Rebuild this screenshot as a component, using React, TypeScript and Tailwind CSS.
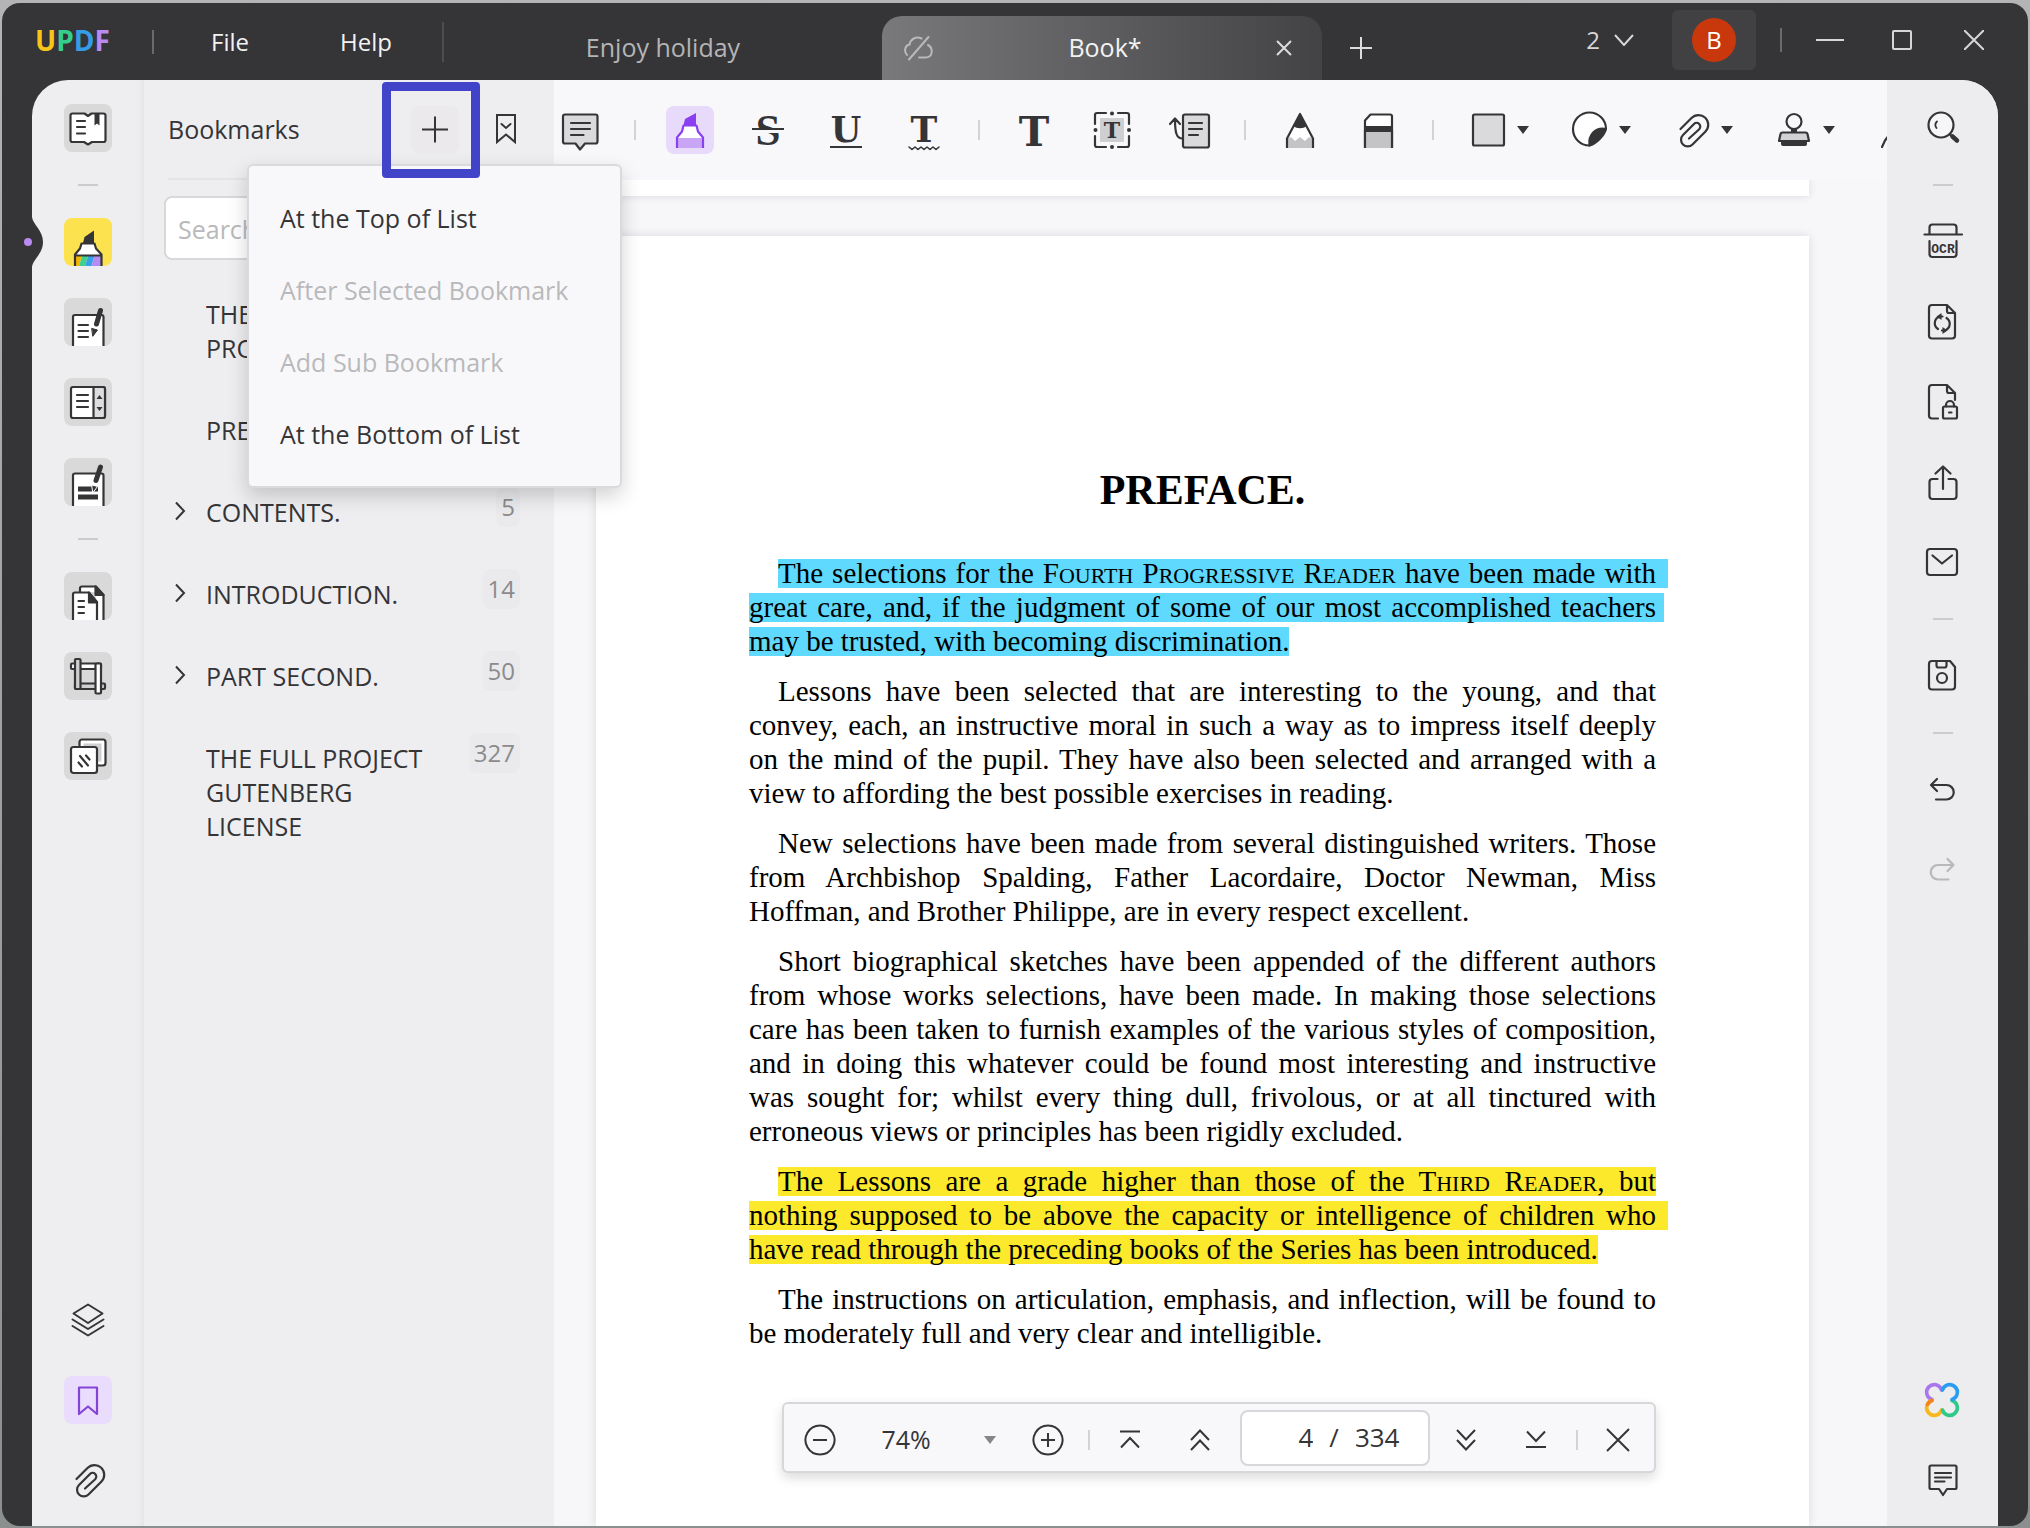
import React from "react";

type IconProps = { children: React.ReactNode; width?: number };

// 48px icon canvas, shared by both rails and the toolbar
const Icon = ({ children, width = 2 }: IconProps) => (
  <svg
    viewBox="0 0 48 48"
    className="size-12 shrink-0 overflow-visible"
    fill="none"
    stroke="currentColor"
    strokeWidth={width}
    strokeLinecap="round"
    strokeLinejoin="round"
    aria-hidden="true"
  >
    {children}
  </svg>
);

const BookIcon = () => (
  <Icon width={2.2}>
    <path
      d="M8.5 9.5H20.5L24 12l3.5-2.500H39.500a2 2 0 0 1 2 2V36a2 2 0 0 1-2 2H28l-4 2.500L20 38H8.500a2 2 0 0 1-2-2V11.500a2 2 0 0 1 2-2Z"
      fill="#fff"
    />
    <path d="M13 17h8M13 23h8M13 29.500h8" />
    <path d="M30.500 10h5v11.500l-2.500-2-2.500 2Z" fill="currentColor" stroke="none" />
  </Icon>
);

const MarkerIcon = () => (
  <Icon width={2.2}>
    <path d="M19 25 20.500 19 30 12.500V25Z" fill="currentColor" stroke="none" />
    <path d="M18 25.500h12.500l1.500 5 5 5.500V48H11V36l5-5.500Z" fill="#fff" stroke="none" />
    <path d="M12 38h6l-3 10h-3Z" fill="#f5b400" stroke="none" />
    <path d="M18 38h6l-3 10h-6Z" fill="#3fd08c" stroke="none" />
    <path d="M24 38h6.500l-3 10H21Z" fill="#38a0e8" stroke="none" />
    <path d="M30.500 38H37v10h-9.500Z" fill="#b48af5" stroke="none" />
    <path d="M11 48V36.500l5-6 1.500-5h13l1.500 5 5.500 6V48M11 37.500h26.500" strokeLinecap="butt" />
  </Icon>
);

const EditIcon = () => (
  <Icon width={2.2}>
    <path d="M9 48V19a2 2 0 0 1 2-2h26.500a2 2 0 0 1 2 2v29" fill="#fff" strokeLinecap="butt" />
    <path d="M14.500 27H24M14.500 33H24M14.500 39H24" />
    <path d="M36.500 12.500 32.500 26" strokeWidth="5" />
    <path d="M28 30.500 33.500 32l-4.500 6Z" fill="currentColor" strokeWidth="1" />
  </Icon>
);

const ReaderIcon = () => (
  <Icon width={2.2}>
    <rect x="7" y="9" width="34" height="31" rx="2" fill="#fff" />
    <path d="M29.500 9H39a2 2 0 0 1 2 2v27a2 2 0 0 1-2 2h-9.500Z" fill="#dddddf" />
    <path d="M13 17h11M13 23h11M13 29h11" />
    <path d="M35.500 17l3 4h-6ZM35.500 33l3-4h-6Z" fill="currentColor" stroke="none" />
  </Icon>
);

const RedactIcon = () => (
  <Icon width={2.2}>
    <path d="M9 48V17.500a2 2 0 0 1 2-2h26.500a2 2 0 0 1 2 2V48" fill="#fff" strokeLinecap="butt" />
    <path d="M14 28.500h20v5H14ZM14 36.500h20v5H14Z" fill="currentColor" stroke="none" />
    <path d="M36.500 9 32 22.500" strokeWidth="5" />
    <path d="M28 27 33.500 28.500l-4.500 6Z" fill="currentColor" stroke="#fff" strokeWidth="1" />
  </Icon>
);

const PagesIcon = () => (
  <Icon width={2.2}>
    <path d="M16 20v-3.500a2 2 0 0 1 2-2h14l7.500 8.500V48H32V20Z" fill="#fff" stroke="none" />
    <path d="M16 20v-3.500a2 2 0 0 1 2-2h14l7.500 8.500V48" strokeLinecap="butt" />
    <path d="M31.500 14.500V23h8Z" fill="currentColor" />
    <path d="M9 48V22.500a2 2 0 0 1 2-2h13.500L33 30v18" fill="#fff" strokeLinecap="butt" />
    <path d="M25 20.500V30.500h8Z" fill="currentColor" />
    <path d="M14.500 29H20M14.500 35H20M14.500 41H20" />
  </Icon>
);

const CropIcon = () => (
  <Icon width={2.2}>
    <rect x="7" y="11.500" width="30" height="5.500" rx="1" fill="#fff" />
    <rect x="11" y="31.500" width="30" height="5.500" rx="1" fill="#cfcfd1" />
    <rect x="11" y="7" width="5.500" height="30" rx="1" fill="#cfcfd1" />
    <rect x="31.500" y="11.500" width="5.500" height="30" rx="1" fill="#fff" />
  </Icon>
);

const WatermarkIcon = () => (
  <Icon width={2.2}>
    <rect x="15.500" y="7.500" width="26" height="26" rx="2.500" fill="#fff" />
    <rect x="19.500" y="11.500" width="18" height="18" fill="#cfcfd1" stroke="none" />
    <rect x="7" y="15" width="26" height="26" rx="2.500" fill="#fff" />
    <path d="M14.500 30.500 18 34.500M16 24 24 33.500M22 23.500 25.500 27.500" />
  </Icon>
);

const LayersIcon = () => (
  <Icon>
    <path d="M24 8.500 38.500 17.500 24 27 9.500 17.500ZM8.500 23.500 24 33l15.500-9.500M8.500 30 24 39.500 39.500 30" />
  </Icon>
);

const BookmarkIcon = () => (
  <Icon width={2.2}>
    <path d="M15 11.500H33V38L24 30.500 15 38Z" />
  </Icon>
);

const ClipIcon = () => (
  <Icon width={2.2}>
    <path d="M12.500 23 23.500 12a9.700 9.700 0 0 1 14 13.500L24.500 38.500A6.600 6.600 0 0 1 15 29L26 18a3.600 3.600 0 0 1 5.200 5.200L21 32.500" />
  </Icon>
);

const CommentIcon = () => (
  <Icon width={2.2}>
    <path
      d="M9 8.500H39.500a2 2 0 0 1 2 2V35.500a2 2 0 0 1-2 2H29L24 43.500 19.500 37.500H9a2 2 0 0 1-2-2V10.500a2 2 0 0 1 2-2Z"
      fill="#dadadc"
    />
    <path d="M15 17H34M15 23H34M15 29H27.500" />
  </Icon>
);

const HighlightToolIcon = () => (
  <Icon width={2.2}>
    <path d="M17.500 19 19 13 30 7V19Z" fill="currentColor" stroke="none" />
    <path d="M17 19.500H30.500l2 6 4.500 6V42H11V31.500l4.500-6Z" fill="#fff" stroke="none" />
    <path d="M11 32H37V42H11Z" fill="#c9a5f6" stroke="none" />
    <path d="M11 42V31.500l5-6 1.500-6h13l1.500 6 5 6V42" strokeLinecap="butt" />
  </Icon>
);

type GlyphProps = { y: number; size: number; slab?: boolean; children: string };

const Glyph = ({ y, size, slab = true, children }: GlyphProps) => (
  <text
    x="24"
    y={y}
    fontSize={size}
    textAnchor="middle"
    fill="currentColor"
    stroke="none"
    className={slab ? "font-['DejaVu_Serif',serif] font-bold" : "font-['Liberation_Serif',serif] font-bold"}
  >
    {children}
  </text>
);

const StrikeIcon = () => (
  <Icon>
    <Glyph y={39} size={45} slab={false}>S</Glyph>
    <path d="M8 25.500H40" stroke="#f8f8fa" strokeWidth="3" strokeLinecap="butt" />
    <path d="M8 23H40" strokeLinecap="butt" />
  </Icon>
);

const UnderlineIcon = () => (
  <Icon>
    <Glyph y={36} size={35}>U</Glyph>
    <path d="M8 41H40" strokeLinecap="butt" />
  </Icon>
);

const SquigglyIcon = () => (
  <Icon>
    <Glyph y={36} size={36}>T</Glyph>
    <path d="M9 41l3 2.500 3-2.500 3 2.500 3-2.500 3 2.500 3-2.500 3 2.500 3-2.500 3 2.500 3-2.500" strokeWidth="1.600" />
  </Icon>
);

const TextIcon = () => (
  <Icon>
    <Glyph y={40} size={41}>T</Glyph>
  </Icon>
);

const TextBoxIcon = () => (
  <Icon width={2.2}>
    <rect x="12" y="12" width="24" height="24" fill="#cfcfd1" stroke="none" />
    <Glyph y={32} size={22}>T</Glyph>
    <path d="M18 7H9a2 2 0 0 0-2 2v9M30 7h9a2 2 0 0 1 2 2v9M7 30v9a2 2 0 0 0 2 2h9M41 30v9a2 2 0 0 1-2 2h-9" />
    <path d="M24 7.500h.01M24 41h.01M7.500 24h.01M41 24h.01" strokeWidth="4" />
  </Icon>
);

const CalloutIcon = () => (
  <Icon width={2.2}>
    <rect x="17" y="8.500" width="26" height="33" rx="2" fill="#dadadc" />
    <path d="M23 17H36M23 23H36M23 29H32M4 18 9 12.500 14 18M9 13C9 27 10.500 32.500 16.500 32.500" />
  </Icon>
);

const PencilIcon = () => (
  <Icon width={2.2}>
    <path d="M24 8 37 32V42H11V32Z" fill="#fff" stroke="none" />
    <path d="M11 33l4-2 4 4 5-4 5 4 4-4 4 2V42H11Z" fill="#c4c4c6" stroke="none" />
    <path d="M11 42V32.500L24 8 37 32.500V42" strokeLinecap="butt" />
    <path d="M24 8 30.500 20c-3 3-10 3-13 0Z" fill="currentColor" stroke="none" />
  </Icon>
);

const EraserIcon = () => (
  <Icon width={2.2}>
    <path d="M11 42V14.500L16.500 8.500H36a2 2 0 0 1 2 2V42" fill="#fff" strokeLinecap="butt" />
    <path d="M12 24H37V42H12Z" fill="#c4c4c6" stroke="none" />
    <path d="M11 20H38v6H11Z" fill="currentColor" stroke="none" />
    <path d="M11 42V24M38 42V24" strokeLinecap="butt" />
  </Icon>
);

const SquareIcon = () => (
  <Icon width={2.2}>
    <rect x="9" y="8.500" width="31" height="31" rx="1.500" fill="#dadadc" />
  </Icon>
);

const StickerIcon = () => (
  <Icon width={2.2}>
    <path d="M40 23a16.500 16.500 0 1 0-16.500 16.500" fill="#fff" />
    <path d="M40 23C30 21 22 28 23.500 39.500 30 38 38 30 40 23Z" fill="currentColor" />
  </Icon>
);

const StampIcon = () => (
  <Icon width={2.2}>
    <circle cx="24" cy="15.500" r="7.500" />
    <path d="M21 22.500h6v4h-6Z" fill="currentColor" stroke="none" />
    <path d="M12.500 26.500H35.500a2 2 0 0 1 2 1.500L39 35H9l1.500-7a2 2 0 0 1 2-1.500Z" fill="#d2d2d4" />
    <path d="M11 35.500H37V38a2 2 0 0 1-2 2H13a2 2 0 0 1-2-2Z" fill="currentColor" stroke="none" />
  </Icon>
);

const SignIcon = () => (
  <Icon width={2.2}>
    <path d="M10 41 13 34.500 24 20" />
  </Icon>
);

const PlusIcon = () => (
  <Icon>
    <path d="M24 10.500V36.500M11 23.500H37" strokeLinecap="butt" />
  </Icon>
);

const BookmarkDownIcon = () => (
  <Icon>
    <path d="M15 9H33V36L24 28.500 15 36ZM19.500 18 24 22l4.500-4" strokeLinejoin="miter" />
  </Icon>
);

const SearchIcon = () => (
  <Icon width={2.2}>
    <circle cx="22" cy="21" r="12.500" fill="#f6f5f7" />
    <path d="M18 17.500c-2 2-2 4.500-.5 6.500" strokeWidth="1.800" />
    <path d="M31 30.500 33 32.500" />
    <path d="M33.500 32.500 38 36.500" strokeWidth="4.500" />
  </Icon>
);

const OcrIcon = () => (
  <Icon width={2.2}>
    <path d="M10.500 16V9.500a3 3 0 0 1 3-3h21a3 3 0 0 1 3 3V16M5.500 16.500H43M10.500 23V36a3 3 0 0 0 3 3h21a3 3 0 0 0 3-3V23" />
    <text
      x="24"
      y="34.500"
      fontSize="13"
      textAnchor="middle"
      fill="currentColor"
      stroke="none"
      className="font-['Liberation_Mono',monospace] font-bold"
    >
      OCR
    </text>
  </Icon>
);

const ConvertIcon = () => (
  <Icon width={2.2}>
    <path d="M28 7H13a3 3 0 0 0-3 3V37.500a3 3 0 0 0 3 3H33a3 3 0 0 0 3-3V15ZM28 7v6a2 2 0 0 0 2 2h6" />
    <path d="M19 31c-4.500-3-4.500-10 1.500-12.500h3M27.500 20c4.500 3 4.500 10-1.500 12.500h-3" />
    <path d="M22.500 15v7l-5-3.500ZM23.500 29v7l5-3.500Z" fill="currentColor" stroke="none" />
  </Icon>
);

const LockIcon = () => (
  <Icon width={2.2}>
    <path d="M19 40.500H13a3 3 0 0 1-3-3V10a3 3 0 0 1 3-3H28l8 8V22M28 7v6a2 2 0 0 0 2 2h6" />
    <rect x="24" y="28.500" width="14" height="12" rx="1.500" />
    <path d="M27 28.500V27a4 4 0 0 1 8 0v1.500M30 34.500h2.500" />
  </Icon>
);

const ShareIcon = () => (
  <Icon width={2.2}>
    <path d="M18.500 21H13.500a3 3 0 0 0-3 3V38a3 3 0 0 0 3 3h21a3 3 0 0 0 3-3V24a3 3 0 0 0-3-3H29.500M24 31V8.500M16.500 15.500 24 8.500l7.500 7" />
  </Icon>
);

const MailIcon = () => (
  <Icon width={2.2}>
    <rect x="8" y="11" width="30" height="26" rx="3" />
    <path d="M13.500 17.500 23 25.500 33 17.500" />
  </Icon>
);

const SaveIcon = () => (
  <Icon width={2.2}>
    <path d="M13 9H31l5 6V34.500a3 3 0 0 1-3 3H13a3 3 0 0 1-3-3V12a3 3 0 0 1 3-3ZM17.500 9v4.500a2 2 0 0 0 2 2h6a2 2 0 0 0 2-2V9" />
    <circle cx="23" cy="26" r="5" />
  </Icon>
);

const UndoIcon = () => (
  <Icon width={2.2}>
    <path d="M18 13 12 19l6 6M12.500 19H27.500a7 7 0 0 1 0 14.500H17" />
  </Icon>
);

const RedoIcon = () => (
  <Icon width={2.2}>
    <path d="M28.500 13 34.500 19l-6 6M34 19H19a7 7 0 0 0 0 14.500H29.500" />
  </Icon>
);

const AiIcon = () => (
  <Icon width={3.6}>
    <path d="M22.500 14A7.600 7.600 0 1 0 13 23.500" stroke="#a877ec" />
    <path d="M13 24.500A7.600 7.600 0 1 0 22.500 34" stroke="#f8b71c" />
    <path d="M13 24.500A7.600 7.600 0 0 0 8.500 28.500" stroke="#f58220" />
    <path d="M23.500 34A7.600 7.600 0 1 0 33 24.500" stroke="#2fc98a" />
    <path d="M33 23.500A7.600 7.600 0 1 0 23.500 14" stroke="#2b9df0" />
  </Icon>
);

const NoteIcon = () => (
  <Icon width={2.2}>
    <path d="M12 9.500H36a1.500 1.500 0 0 1 1.500 1.500V31.500A1.500 1.500 0 0 1 36 33H28l-4 6-4-6H12a1.500 1.500 0 0 1-1.500-1.500V11A1.500 1.500 0 0 1 12 9.500ZM16 17H32M16 21.500H32M16 25.500H25.500" />
  </Icon>
);

const Caret = () => (
  <svg viewBox="0 0 12 8" className="h-2 w-3" fill="currentColor" aria-hidden="true">
    <path d="M0 0H12L6 8Z" />
  </svg>
);

type RailItem = { label: string; icon?: React.ReactNode; tile?: string };

const leftRail: RailItem[] = [
  { label: "Reader", icon: <BookIcon />, tile: "bg-[#d9d9da]" },
  { label: "divider-1" },
  { label: "Comment", icon: <MarkerIcon />, tile: "bg-[#fde24f]" },
  { label: "Edit", icon: <EditIcon />, tile: "bg-[#d9d9da]" },
  { label: "Form", icon: <ReaderIcon />, tile: "bg-[#d9d9da]" },
  { label: "Redact", icon: <RedactIcon />, tile: "bg-[#d9d9da]" },
  { label: "divider-2" },
  { label: "Organize pages", icon: <PagesIcon />, tile: "bg-[#d9d9da]" },
  { label: "Crop", icon: <CropIcon />, tile: "bg-[#d9d9da]" },
  { label: "Watermark", icon: <WatermarkIcon />, tile: "bg-[#d9d9da]" },
];

const leftRailBottom: RailItem[] = [
  { label: "Layers", icon: <LayersIcon /> },
  { label: "Bookmark", icon: <BookmarkIcon />, tile: "bg-[#e9dcfc] text-[#8544d6]" },
  { label: "Attachments", icon: <ClipIcon /> },
];

const rightRail: RailItem[] = [
  { label: "Search", icon: <SearchIcon /> },
  { label: "divider-1" },
  { label: "Recognize text", icon: <OcrIcon /> },
  { label: "Convert", icon: <ConvertIcon /> },
  { label: "Protect", icon: <LockIcon /> },
  { label: "Share", icon: <ShareIcon /> },
  { label: "Email", icon: <MailIcon /> },
  { label: "divider-2" },
  { label: "Save", icon: <SaveIcon /> },
  { label: "divider-3" },
  { label: "Undo", icon: <UndoIcon /> },
  { label: "Redo", icon: <RedoIcon />, tile: "text-[#b9b7ba]" },
];

const rightRailBottom: RailItem[] = [
  { label: "AI", icon: <AiIcon /> },
  { label: "Notes", icon: <NoteIcon /> },
];

const RailGroup = ({ items }: { items: RailItem[] }) => (
  <div className="flex flex-col items-center gap-8">
    {items.map((item) =>
      item.icon ? (
        <button key={item.label} aria-label={item.label} className={`size-12 rounded-lg ${item.tile ?? ""}`}>
          {item.icon}
        </button>
      ) : (
        <div key={item.label} className="h-0.5 w-5 bg-[#cbcbcd]" />
      )
    )}
  </div>
);

const tools: RailItem[] = [
  { label: "Note", icon: <CommentIcon /> },
  { label: "divider-1" },
  { label: "Highlight", icon: <HighlightToolIcon />, tile: "bg-[#e8dafb] text-[#8a3ff0]" },
  { label: "Strikethrough", icon: <StrikeIcon /> },
  { label: "Underline", icon: <UnderlineIcon /> },
  { label: "Squiggly", icon: <SquigglyIcon /> },
  { label: "divider-2" },
  { label: "Text", icon: <TextIcon /> },
  { label: "Text box", icon: <TextBoxIcon /> },
  { label: "Callout", icon: <CalloutIcon /> },
  { label: "divider-3" },
  { label: "Pencil", icon: <PencilIcon /> },
  { label: "Eraser", icon: <EraserIcon /> },
  { label: "divider-4" },
];

const dropTools: RailItem[] = [
  { label: "Shapes", icon: <SquareIcon /> },
  { label: "Stickers", icon: <StickerIcon /> },
  { label: "Attach", icon: <ClipIcon /> },
  { label: "Stamp", icon: <StampIcon /> },
];

const Toolbar = () => (
  <div className="flex h-[100px] shrink-0 items-center gap-[30px] overflow-hidden bg-[#f8f8fa] pl-0.5">
    {tools.map((tool) =>
      tool.icon ? (
        <button key={tool.label} aria-label={tool.label} className={`size-12 shrink-0 rounded-lg ${tool.tile ?? ""}`}>
          {tool.icon}
        </button>
      ) : (
        <div key={tool.label} className="h-5 w-0.5 shrink-0 bg-[#d3d3d5]" />
      )
    )}
    {dropTools.map((tool) => (
      <button key={tool.label} aria-label={tool.label} className="flex w-[72px] shrink-0 items-center">
        {tool.icon}
        <span className="flex w-[22px] justify-center">
          <Caret />
        </span>
      </button>
    ))}
    <button aria-label="Sign" className="size-12 shrink-0">
      <SignIcon />
    </button>
  </div>
);

const bookmarks = [
  { title: "THE PROJECT", page: 1, open: false },
  { title: "PREFACE.", page: 4, open: false },
  { title: "CONTENTS.", page: 5, open: true },
  { title: "INTRODUCTION.", page: 14, open: true },
  { title: "PART SECOND.", page: 50, open: true },
  { title: "THE FULL PROJECT GUTENBERG LICENSE", page: 327, open: false },
];

const menuItems = [
  { label: "At the Top of List", disabled: false },
  { label: "After Selected Bookmark", disabled: true },
  { label: "Add Sub Bookmark", disabled: true },
  { label: "At the Bottom of List", disabled: false },
];

const BookmarkMenu = () => (
  <div
    role="menu"
    className="absolute top-[84px] left-[103px] z-20 flex w-[375px] flex-col rounded-md border-2 border-[#dadadc] bg-[#f8f8fa] pt-[17px] pb-[15px] shadow-[0_8px_20px_rgba(0,0,0,0.18)]"
  >
    {menuItems.map((item) => (
      <button
        key={item.label}
        role="menuitem"
        disabled={item.disabled}
        className="h-[72px] px-[31px] text-left text-[25px] whitespace-nowrap disabled:text-[#b9b9bb]"
      >
        {item.label}
      </button>
    ))}
  </div>
);

const BookmarkPanel = () => (
  <section className="relative w-[410px] shrink-0 bg-[#eeeef0]">
    <div className="flex h-[100px] items-center gap-[23px] px-6">
      <h2 className="flex-1 text-[25px]">Bookmarks</h2>
      <div className="relative size-12">
        <button aria-label="Add bookmark" className="size-12 rounded-lg bg-[#ebe9eb]">
          <PlusIcon />
        </button>
        <div className="pointer-events-none absolute -inset-y-6 -right-[21px] -left-[29px] z-30 rounded border-[9px] border-[#4143c9]" />
      </div>
      <button aria-label="Bookmark options" className="size-12">
        <BookmarkDownIcon />
      </button>
    </div>
    <div className="mx-6 -mt-0.5 h-0.5 bg-[#e4e4e6]" />

    <div className="mt-4 mr-6 ml-5">
      <input
        type="text"
        aria-label="Search bookmarks"
        placeholder="Search"
        className="h-16 w-full rounded-lg border-2 border-[#d8d8da] bg-white px-3 pt-0.5 text-[25px] outline-none placeholder:text-[#b9b9bb]"
      />
    </div>

    <ul className="mt-[37px] flex flex-col gap-12 pr-[34px] pl-[26px]">
      {bookmarks.map((b) => (
        <li key={b.title} className="flex items-start">
          <span className="flex h-8 w-9 shrink-0 items-center pl-1">
            {b.open && (
              <button aria-label={`Expand ${b.title}`}>
                <svg viewBox="0 0 12 20" className="h-5 w-3" fill="none" stroke="currentColor" strokeWidth="2" aria-hidden="true">
                  <path d="M2 1.500 10 10 2 18.500" />
                </svg>
              </button>
            )}
          </span>
          <a href="#page" className={`text-[25px] leading-[34px] ${b.page === 1 ? "w-28" : "max-w-[230px]"}`}>
            {b.title}
          </a>
          <span className="-mt-2 -mb-2 ml-auto h-10 rounded-lg bg-[#eaeaec] px-[5px] text-[24px] leading-10 text-[#8b8b8d]">
            {b.page}
          </span>
        </li>
      ))}
    </ul>

    <BookmarkMenu />
  </section>
);

const Caps = ({ first, rest }: { first: string; rest: string }) => (
  <>
    {first}
    <span className="text-[22px] leading-none">{rest}</span>
  </>
);

const CYAN = "bg-transparent bg-[linear-gradient(transparent_2px,#5fd9fd_2px,#5fd9fd_31px,transparent_31px)] text-black";
const YELLOW = "bg-transparent bg-[linear-gradient(transparent_2px,#fce92c_2px,#fce92c_31px,transparent_31px)] text-black";

const DocumentPage = () => (
  <article className="min-h-0 flex-1 bg-white px-[153px] font-['Liberation_Serif',serif] text-black shadow-[0_0_10px_rgba(0,0,0,0.12)]">
    <h1 className="pt-[230px] text-center text-[42px] leading-[48px] font-bold">PREFACE.</h1>
    <div className="flex flex-col gap-4 pt-[42px] text-justify text-[29px] leading-[34px]">
      <p>
        <span className="block pl-[29px] [text-align-last:justify]">
          <mark className={`-mr-3 pr-3 ${CYAN}`}>
            The selections for the <Caps first="F" rest="OURTH" /> <Caps first="P" rest="ROGRESSIVE" />{" "}
            <Caps first="R" rest="EADER" /> have been made with
          </mark>
        </span>
        <span className="block [text-align-last:justify]">
          <mark className={`-mr-2 pr-2 ${CYAN}`}>
            great care, and, if the judgment of some of our most accomplished teachers
          </mark>
        </span>
        <mark className={CYAN}>may be trusted, with becoming discrimination.</mark>
      </p>
      <p className="indent-[29px]">
        Lessons have been selected that are interesting to the young, and that convey, each, an instructive moral in
        such a way as to impress itself deeply on&nbsp;the mind of the pupil. They have also been selected and arranged
        with a view&nbsp;to affording the best possible exercises in reading.
      </p>
      <p className="indent-[29px]">
        New selections have been made from several distinguished writers. Those from Archbishop Spalding, Father
        Lacordaire, Doctor Newman, Miss Hoffman, and Brother Philippe, are in every respect excellent.
      </p>
      <p className="indent-[29px]">
        Short biographical sketches have been appended of the different authors from whose works selections, have been
        made. In making those selections care has been taken to furnish examples of the various styles of composition,
        and in doing this whatever could be found most interesting and instructive was sought for; whilst every thing
        dull, frivolous, or at all tinctured with erroneous views or principles has been rigidly excluded.
      </p>
      <p>
        <span className="block pl-[29px] [text-align-last:justify]">
          <mark className={YELLOW}>
            The Lessons are a grade higher than those of the <Caps first="T" rest="HIRD" />{" "}
            <Caps first="R" rest="EADER" />, but
          </mark>
        </span>
        <span className="block [text-align-last:justify]">
          <mark className={`-mr-3 pr-3 ${YELLOW}`}>
            nothing supposed to be above the capacity or intelligence of children who
          </mark>
        </span>
        <mark className={YELLOW}>have read through the preceding books of the Series has been introduced.</mark>
      </p>
      <p className="indent-[29px]">
        The instructions on articulation, emphasis, and inflection, will be found to be moderately full and very clear
        and intelligible.
      </p>
    </div>
  </article>
);

const NavButton = ({ label, d }: { label: string; d: string }) => (
  <button aria-label={label} className="size-8 shrink-0">
    <svg viewBox="0 0 32 32" className="size-8" fill="none" stroke="currentColor" strokeWidth="2" aria-hidden="true">
      <path d={d} />
    </svg>
  </button>
);

const PageBar = () => (
  <div className="absolute inset-x-0 bottom-[53px] flex justify-center pr-1">
    <div className="flex h-[71px] items-center rounded-md border-2 border-[#d8d6d9] bg-[#f8f7fa] px-5 pt-1 shadow-[0_5px_12px_rgba(0,0,0,0.14)]">
      <NavButton label="Zoom out" d="M16 1.500a14.500 14.500 0 1 0 .01 0ZM9 16H23" />
      <button className="ml-[46px] flex w-[114px] items-center justify-between text-[25px]">
        74%
        <span className="text-[#87858a]">
          <Caret />
        </span>
      </button>
      <span className="ml-9 flex">
        <NavButton label="Zoom in" d="M16 1.500a14.500 14.500 0 1 0 .01 0ZM9 16H23M16 9V23" />
      </span>
      <div className="mx-6 h-5 w-0.5 bg-[#d3d3d5]" />
      <div className="flex gap-[38px]">
        <NavButton label="First page" d="M6 7.500H26M7 23.500 16 14l9 9.500" />
        <NavButton label="Previous page" d="M7 16 16 6.500 25 16M7 26 16 16.500 25 26" />
      </div>
      <label className="mr-5 mb-1 ml-6 flex h-14 w-[190px] items-center justify-end gap-4 rounded-lg border-2 border-[#d8d6d9] bg-white pr-7 text-[26px]">
        <input
          type="text"
          aria-label="Page number"
          defaultValue="4"
          className="w-12 min-w-0 bg-transparent text-right outline-none"
        />
        <span>/</span>
        <span>334</span>
      </label>
      <div className="flex gap-[38px]">
        <NavButton label="Next page" d="M7 6 16 15.500 25 6M7 16 16 25.500 25 16" />
        <NavButton label="Last page" d="M7 7.500 16 17 25 7.500M6 23H26" />
      </div>
      <div className="mx-6 h-5 w-0.5 bg-[#d3d3d5]" />
      <NavButton label="Close" d="M5 5 27 27M27 5 5 27" />
    </div>
  </div>
);

const TitleBar = () => (
  <header className="flex h-[77px] shrink-0 text-[25px] text-[#f2f2f2]">
    <div className="flex items-center pl-[33px]">
      <div className="w-[111px] pb-1 text-[28px] font-bold" aria-label="UPDF">
        <span className="text-[#f7c41a]">U</span>
        <span className="text-[#35cf8d]">P</span>
        <span className="text-[#359ce6]">D</span>
        <span className="text-[#b98bf2]">F</span>
      </div>
      <div className="ml-1.5 h-6 w-0.5 bg-[#6a6a6c]" />
      <nav className="flex px-2 text-[24px]">
        <button className="w-[136px]">File</button>
        <button className="w-[136px]">Help</button>
      </nav>
      <div className="h-10 w-0.5 bg-[#4d4d4f]" />
    </div>

    <div className="flex items-end">
      <button className="h-16 w-[438px] text-[#b4b4b6]">Enjoy holiday</button>
      <div className="flex h-16 w-[440px] items-center justify-between rounded-t-[20px] bg-linear-to-r from-[#79797b] to-[#434345] pr-[30px] pl-[22px]">
        <svg viewBox="0 0 30 26" className="h-[26px] w-[30px]" fill="none" stroke="#b9b9bb" strokeWidth="2" strokeLinecap="round" aria-hidden="true">
          <path d="M3 20C-1 15 2 10 5.500 9.500 6.500 4 12 1 17.500 3.500M24 10c5 2.500 5.500 12-2 12.500h-7M5 24.500 24.500 2" />
        </svg>
        <button className="text-[#f2f2f2]">Book*</button>
        <button aria-label="Close tab">
          <svg viewBox="0 0 16 16" className="size-4" stroke="#dcdcde" strokeWidth="2" aria-hidden="true">
            <path d="M1 1 15 15M15 1 1 15" />
          </svg>
        </button>
      </div>
      <button aria-label="New tab" className="flex h-16 w-[78px] items-center justify-center">
        <svg viewBox="0 0 22 22" className="size-[22px]" stroke="#dcdcde" strokeWidth="2" aria-hidden="true">
          <path d="M11 0V22M0 11H22" />
        </svg>
      </button>
    </div>

    <div className="ml-auto flex items-center pr-11 pb-[3px] text-[24px] text-[#d6d6d8]">
      <button className="flex items-center gap-3.5">
        2
        <svg viewBox="0 0 20 12" className="h-3 w-5" fill="none" stroke="currentColor" strokeWidth="2" aria-hidden="true">
          <path d="M1 1 10 11 19 1" />
        </svg>
      </button>
      <button className="ml-[38px] flex h-[60px] w-[84px] items-center justify-center rounded-md bg-[#414143]">
        <span className="flex size-11 items-center justify-center rounded-full bg-[#c8380c] text-white">B</span>
      </button>
      <div className="ml-6 h-6 w-0.5 bg-[#6a6a6c]" />
      <div className="ml-[34px] flex items-center gap-12">
        <button aria-label="Minimize" className="h-5 w-7">
          <span className="block h-0.5 bg-[#d6d6d8]" />
        </button>
        <button aria-label="Maximize" className="size-5 rounded-xs border-2 border-[#d6d6d8]" />
        <button aria-label="Close window">
          <svg viewBox="0 0 20 20" className="ml-1 size-5" stroke="currentColor" strokeWidth="2" aria-hidden="true">
            <path d="M0 0 20 20M20 0 0 20" />
          </svg>
        </button>
      </div>
    </div>
  </header>
);

const App = () => {
  return (
    <div className="h-screen bg-linear-to-b from-[#b4b4b6] to-[#8b908e] px-0.5 pt-[3px] pb-0.5 font-['Open_Sans','Noto_Sans',sans-serif] text-[#353437]">
      <div className="flex h-full flex-col overflow-hidden rounded-[18px] bg-[#353437]">
        <TitleBar />

        <div className="relative mx-[30px] flex min-h-0 flex-1 overflow-hidden rounded-t-[36px] bg-[#eeeef0]">
          <aside className="flex w-28 shrink-0 flex-col justify-between pt-6 pb-[22px] shadow-[inset_-6px_0_6px_-4px_rgba(0,0,0,0.05)]">
            <RailGroup items={leftRail} />
            <RailGroup items={leftRailBottom} />
          </aside>

          {/* active mode notch */}
          <svg viewBox="0 0 12 50" className="absolute top-[137px] left-0 h-[50px] w-3" fill="#353437" aria-hidden="true">
            <path d="M0 0C1 8 11 13 11 25S1 42 0 50Z" />
          </svg>

          <BookmarkPanel />

          <main className="relative flex min-w-0 flex-1 flex-col bg-[#f7f6f9]">
            <Toolbar />
            <div className="flex min-h-0 flex-1 flex-col gap-10 overflow-hidden pr-[78px] pl-[42px]">
              <div className="h-4 shrink-0 bg-white shadow-[0_0_10px_rgba(0,0,0,0.12)]" />
              <DocumentPage />
            </div>
            <PageBar />
          </main>

          <aside className="flex w-[111px] shrink-0 flex-col justify-between bg-[#edecee] pt-6 pb-[22px]">
            <RailGroup items={rightRail} />
            <RailGroup items={rightRailBottom} />
          </aside>
        </div>
      </div>
      <span className="absolute top-[238px] left-6 size-2 rounded-full bg-[#b98af0]" />
    </div>
  );
};

export default App;
